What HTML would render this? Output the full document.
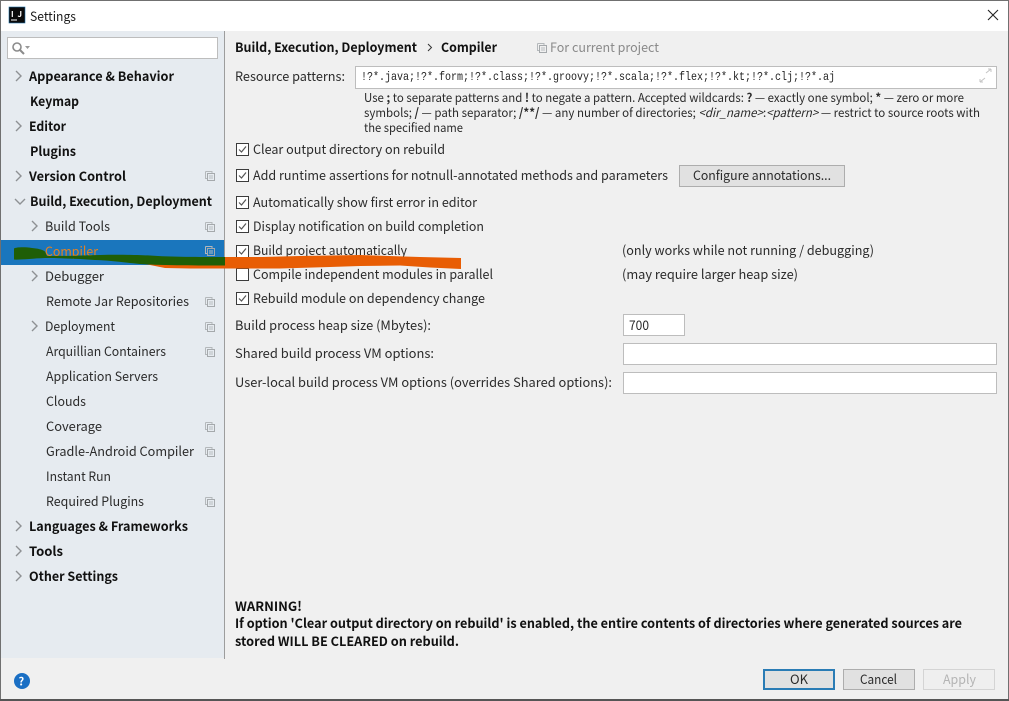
<!DOCTYPE html>
<html><head><meta charset="utf-8"><title>Settings</title>
<style>
html,body{margin:0;padding:0;background:#f0f0f0;width:1009px;height:701px;overflow:hidden}
svg{display:block;position:absolute;left:0;top:0}
text{font-family:"Noto Sans CJK SC","Liberation Sans",sans-serif;font-size:13px;fill:#1c1c1c}
.b{font-weight:700;fill:#111}
.h{font-size:12px;fill:#2a2a2a}
.n{fill:#2b2b2b}
</style></head><body>
<svg width="1009" height="701" viewBox="0 0 1009 701" xmlns="http://www.w3.org/2000/svg">
<defs>
<g id="c"><path d="M0.5 0.5h6.5l0 1.5M0.5 .5v7h2" fill="none" stroke="#b4b8bb"/><rect x="2.5" y="2.5" width="7" height="7" fill="none" stroke="#a5a9ac"/><path d="M4 5h4M4 7h4" stroke="#b8bcbf"/></g>
<path id="r" d="M0 0l5 5l-5 5" fill="none" stroke="#8e9194" stroke-width="1.4"/>
<g id="k"><rect x=".5" y=".5" width="12" height="12" fill="#fff" stroke="#3c3c3c"/><path d="M3 6.5l2.5 2.5l4.5-5.5" fill="none" stroke="#555" stroke-width="1.2"/></g>
</defs>
<rect width="1009" height="701" fill="#f0f0f0"/>
<rect width="1009" height="31" fill="#fff"/>
<rect x="1" y="31" width="223" height="627" fill="#e6ebf0"/>
<rect x="224" y="31" width="1" height="628" fill="#9d9d9d"/>
<rect width="1009" height="1" fill="#707070"/>
<rect width="1" height="701" fill="#707070"/>
<rect x="1008" width="1" height="701" fill="#707070"/>
<rect y="699" width="1009" height="2" fill="#555"/>

<rect x="9" y="7" width="16" height="16" fill="#0a0a0a" stroke="#1d6fa8" stroke-width=".6"/>
<text x="11" y="17" style="font-size:8px;fill:#fff;font-weight:700" textLength="11">IJ</text>
<rect x="11" y="19.5" width="6" height="1" fill="#fff"/>
<text x="30" y="21" textLength="46" lengthAdjust="spacingAndGlyphs">Settings</text>
<path d="M988 10l10 10M998 10l-10 10" stroke="#222" stroke-width="1.1" fill="none"/>

<rect x="7.5" y="37.5" width="210" height="21" fill="#fff" stroke="#bdbdbd"/>
<circle cx="17" cy="47" r="4" fill="none" stroke="#8b8b8b" stroke-width="1.6"/>
<path d="M20 50l4 4" stroke="#8b8b8b" stroke-width="2"/>
<path d="M25 46h5l-2.5 3z" fill="#999"/>

<rect x="1" y="240" width="223" height="25" fill="#1a76bd"/>

<use href="#r" x="16" y="71"/><use href="#r" x="16" y="121"/><use href="#r" x="16" y="171"/>
<use href="#r" x="16" y="521"/><use href="#r" x="16" y="546"/><use href="#r" x="16" y="571"/>
<path d="M15 199l5 5l5-5" fill="none" stroke="#8e9194" stroke-width="1.4"/>
<use href="#r" x="32" y="221"/><use href="#r" x="32" y="271"/><use href="#r" x="32" y="321"/>

<use href="#c" x="205" y="171"/><use href="#c" x="205" y="222"/><use href="#c" x="205" y="246"/>
<use href="#c" x="205" y="297"/><use href="#c" x="205" y="322"/><use href="#c" x="205" y="347"/>
<use href="#c" x="205" y="422"/><use href="#c" x="205" y="447"/><use href="#c" x="205" y="497"/>

<text class="b" x="29" y="81" textLength="145" lengthAdjust="spacingAndGlyphs">Appearance &amp; Behavior</text>
<text class="b" x="30" y="106" textLength="49" lengthAdjust="spacingAndGlyphs">Keymap</text>
<text class="b" x="29" y="131" textLength="37" lengthAdjust="spacingAndGlyphs">Editor</text>
<text class="b" x="30" y="156" textLength="46" lengthAdjust="spacingAndGlyphs">Plugins</text>
<text class="b" x="29" y="181" textLength="97" lengthAdjust="spacingAndGlyphs">Version Control</text>
<text class="b" x="30" y="206" textLength="182" lengthAdjust="spacingAndGlyphs">Build, Execution, Deployment</text>
<text class="n" x="45" y="231" textLength="65" lengthAdjust="spacingAndGlyphs">Build Tools</text>
<text x="45" y="256" textLength="53" lengthAdjust="spacingAndGlyphs" style="fill:#e8821e">Compiler</text>
<text class="n" x="45" y="281" textLength="59" lengthAdjust="spacingAndGlyphs">Debugger</text>
<text class="n" x="46" y="306" textLength="143" lengthAdjust="spacingAndGlyphs">Remote Jar Repositories</text>
<text class="n" x="45" y="331" textLength="70" lengthAdjust="spacingAndGlyphs">Deployment</text>
<text class="n" x="46" y="356" textLength="120" lengthAdjust="spacingAndGlyphs">Arquillian Containers</text>
<text class="n" x="46" y="381" textLength="112" lengthAdjust="spacingAndGlyphs">Application Servers</text>
<text class="n" x="46" y="406" textLength="40" lengthAdjust="spacingAndGlyphs">Clouds</text>
<text class="n" x="46" y="431" textLength="56" lengthAdjust="spacingAndGlyphs">Coverage</text>
<text class="n" x="46" y="456" textLength="148" lengthAdjust="spacingAndGlyphs">Gradle-Android Compiler</text>
<text class="n" x="46" y="481" textLength="65" lengthAdjust="spacingAndGlyphs">Instant Run</text>
<text class="n" x="46" y="506" textLength="98" lengthAdjust="spacingAndGlyphs">Required Plugins</text>
<text class="b" x="29" y="531" textLength="159" lengthAdjust="spacingAndGlyphs">Languages &amp; Frameworks</text>
<text class="b" x="29" y="556" textLength="34" lengthAdjust="spacingAndGlyphs">Tools</text>
<text class="b" x="29" y="581" textLength="89" lengthAdjust="spacingAndGlyphs">Other Settings</text>

<text class="b" x="235" y="52" textLength="182" lengthAdjust="spacingAndGlyphs">Build, Execution, Deployment</text>
<path d="M428 44l3.500 3.500l-3.500 3.500" fill="none" stroke="#333" stroke-width="1"/>
<text class="b" x="441" y="52" textLength="56" lengthAdjust="spacingAndGlyphs">Compiler</text>
<use href="#c" x="537" y="43"/>
<text x="550" y="52" textLength="109" lengthAdjust="spacingAndGlyphs" style="fill:#8a8a8a">For current project</text>

<text class="n" x="235" y="81" textLength="110" lengthAdjust="spacingAndGlyphs">Resource patterns:</text>
<rect x="355.5" y="66.5" width="641" height="22" fill="#fff" stroke="#bdbdbd"/>
<text x="361" y="80" textLength="474" lengthAdjust="spacingAndGlyphs" style="font-family:'Liberation Mono',monospace;font-size:12px;fill:#222">!?*.java;!?*.form;!?*.class;!?*.groovy;!?*.scala;!?*.flex;!?*.kt;!?*.clj;!?*.aj</text>
<path d="M986 73l5-4M991 69h-3M991 69v3M985 74h-0M980 82l5-4M980 82h3M980 82v-3" stroke="#c4c4c4" fill="none"/>

<text class="h" x="364" y="102" textLength="600" lengthAdjust="spacingAndGlyphs">Use <tspan font-weight="700">;</tspan> to separate patterns and <tspan font-weight="700">!</tspan> to negate a pattern. Accepted wildcards: <tspan font-weight="700">?</tspan> — exactly one symbol; <tspan font-weight="700">*</tspan> — zero or more</text>
<text class="h" x="364" y="117" textLength="616" lengthAdjust="spacingAndGlyphs">symbols; <tspan font-weight="700">/</tspan> — path separator; <tspan font-weight="700">/**/</tspan> — any number of directories; <tspan font-style="italic">&lt;dir_name&gt;</tspan>:<tspan font-style="italic">&lt;pattern&gt;</tspan> — restrict to source roots with</text>
<text class="h" x="364" y="132" textLength="99" lengthAdjust="spacingAndGlyphs">the specified name</text>

<use href="#k" x="236" y="143"/>
<text class="n" x="253" y="154" textLength="192" lengthAdjust="spacingAndGlyphs">Clear output directory on rebuild</text>
<use href="#k" x="236" y="169"/>
<text class="n" x="253" y="180" textLength="415" lengthAdjust="spacingAndGlyphs">Add runtime assertions for notnull-annotated methods and parameters</text>
<rect x="679.5" y="165.5" width="165" height="21" fill="#e1e1e1" stroke="#adadad"/>
<text class="n" x="693" y="180" textLength="138" lengthAdjust="spacingAndGlyphs">Configure annotations...</text>
<use href="#k" x="236" y="196"/>
<text class="n" x="253" y="207" textLength="224" lengthAdjust="spacingAndGlyphs">Automatically show first error in editor</text>
<use href="#k" x="236" y="220"/>
<text class="n" x="253" y="231" textLength="231" lengthAdjust="spacingAndGlyphs">Display notification on build completion</text>
<use href="#k" x="236" y="245"/>
<text class="n" x="253" y="255" textLength="154" lengthAdjust="spacingAndGlyphs">Build project automatically</text>
<rect x="236.500" y="268.500" width="12" height="12" fill="#fff" stroke="#3c3c3c"/>
<text class="n" x="253" y="279" textLength="240" lengthAdjust="spacingAndGlyphs">Compile independent modules in parallel</text>
<use href="#k" x="236" y="292"/>
<text class="n" x="253" y="303" textLength="232" lengthAdjust="spacingAndGlyphs">Rebuild module on dependency change</text>
<text class="n" x="622" y="255" textLength="252" lengthAdjust="spacingAndGlyphs">(only works while not running / debugging)</text>
<text class="n" x="622" y="279" textLength="176" lengthAdjust="spacingAndGlyphs">(may require larger heap size)</text>

<text class="n" x="235" y="330" textLength="196" lengthAdjust="spacingAndGlyphs">Build process heap size (Mbytes):</text>
<rect x="623.500" y="314.500" width="61" height="21" fill="#fff" stroke="#bdbdbd"/>
<text class="n" x="629" y="330" textLength="20" lengthAdjust="spacingAndGlyphs">700</text>
<text class="n" x="235" y="358" textLength="199" lengthAdjust="spacingAndGlyphs">Shared build process VM options:</text>
<rect x="623.500" y="343.500" width="373" height="21" fill="#fff" stroke="#bdbdbd"/>
<text class="n" x="235" y="387" textLength="377" lengthAdjust="spacingAndGlyphs">User-local build process VM options (overrides Shared options):</text>
<rect x="623.500" y="372.500" width="373" height="21" fill="#fff" stroke="#bdbdbd"/>

<text class="b" x="235" y="611" textLength="67" lengthAdjust="spacingAndGlyphs">WARNING!</text>
<text class="b" x="235" y="628" textLength="727" lengthAdjust="spacingAndGlyphs">If option 'Clear output directory on rebuild' is enabled, the entire contents of directories where generated sources are</text>
<text class="b" x="235" y="646" textLength="224" lengthAdjust="spacingAndGlyphs">stored WILL BE CLEARED on rebuild.</text>

<circle cx="22" cy="681" r="8" fill="#1a6fc4"/>
<text x="18.500" y="685.500" style="font-size:11px;fill:#fff;font-weight:700">?</text>

<rect x="764" y="670" width="70" height="19" fill="#e1e1e1" stroke="#2a7cb5" stroke-width="2"/>
<text class="n" x="790" y="684" textLength="18" lengthAdjust="spacingAndGlyphs">OK</text>
<rect x="843.500" y="669.500" width="71" height="20" fill="#e1e1e1" stroke="#adadad"/>
<text class="n" x="860" y="684" textLength="37" lengthAdjust="spacingAndGlyphs">Cancel</text>
<rect x="923.500" y="669.500" width="71" height="20" fill="#efefef" stroke="#d4d4d4"/>
<text x="943" y="684" textLength="33" lengthAdjust="spacingAndGlyphs" style="fill:#b4b4b4">Apply</text>

<path d="M135 262L165 265L220 257L262 257L300 256L360 255L420 257L461 258L461 269L430 267.500L400 265.500L360 266L330 267L280 268.500L224 268.500L190 268.500L165 268Z" fill="#e85d04"/>
<path d="M14 248.500C17 247 25 247 32 248C38 248.500 42 249.500 45 251.500L47 256C65 256 85 255.500 100 255C120 254.500 140 255 150 255.500C170 257 200 257 225 257L225 265.500C200 265.500 165 265.500 140 264C120 262 110 260.500 95 260C75 258.500 55 258 45 258C32 258.500 20 260 14 259.500Z" fill="#1f5e06"/>
</svg>
</body></html>
